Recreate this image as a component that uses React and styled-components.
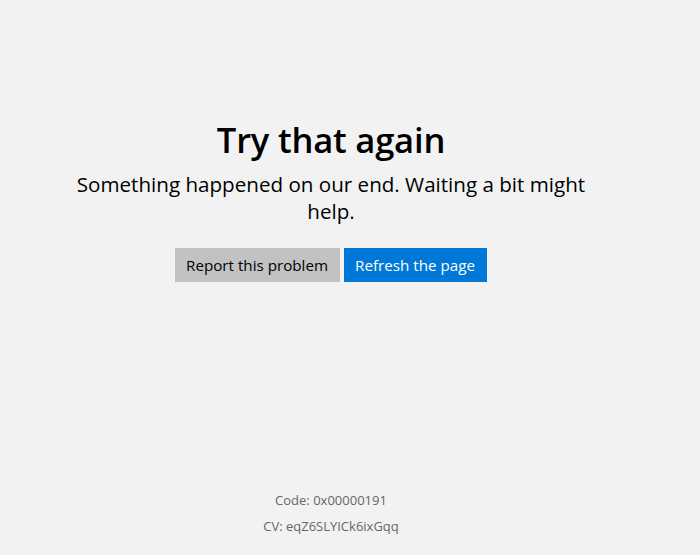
import React from "react";
import styled, { createGlobalStyle } from "styled-components";

const Global = createGlobalStyle`
  html, body { margin: 0; padding: 0; background: #f2f2f2; }
  body { font-family: "Open Sans", "Noto Sans", sans-serif; color: #000; }
`;

const Page = styled.div`
  box-sizing: border-box;
  width: 662px;
  height: 555px;
  display: flex;
  flex-direction: column;
  align-items: center;
  padding-top: 118px;
  padding-bottom: 19px;
`;

const Title = styled.h1`
  margin: 0;
  font-size: 34.6px;
  font-weight: 600;
  line-height: 44px;
  letter-spacing: -0.2px;
`;

const Message = styled.p`
  margin: 9px 0 0;
  width: 540px;
  text-align: center;
  font-size: 20.6px;
  line-height: 27px;
  font-weight: 400;
`;

const Actions = styled.div`
  display: flex;
  gap: 4px;
  margin-top: 23px;
`;

const Button = styled.button`
  height: 34px;
  border: none;
  border-radius: 0;
  padding: 0 12px 0 11px;
  font-family: inherit;
  font-size: 15.2px;
  background: ${(p) => (p.$primary ? "#0078d7" : "#c2c2c2")};
  color: ${(p) => (p.$primary ? "#fff" : "#000")};
  cursor: pointer;
`;

const Footer = styled.div`
  margin-top: auto;
  display: flex;
  flex-direction: column;
  align-items: center;
  gap: 6px;
  font-size: 13px;
  line-height: 20px;
  color: #666;
`;

export default function App() {
  return (
    <>
      <Global />
      <Page>
        <Title>Try that again</Title>
        <Message>Something happened on our end. Waiting a bit might help.</Message>
        <Actions>
          <Button>Report this problem</Button>
          <Button $primary>Refresh the page</Button>
        </Actions>
        <Footer>
          <span>Code: 0x00000191</span>
          <span>CV: eqZ6SLYICk6ixGqq</span>
        </Footer>
      </Page>
    </>
  );
}
